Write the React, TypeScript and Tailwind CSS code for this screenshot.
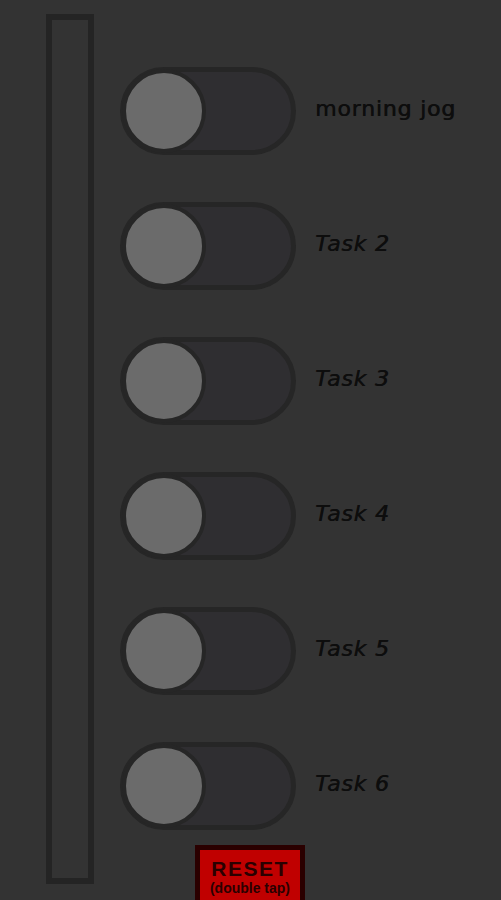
const tasks = [
  { label: 'morning jog', italic: false },
  { label: 'Task 2', italic: true },
  { label: 'Task 3', italic: true },
  { label: 'Task 4', italic: true },
  { label: 'Task 5', italic: true },
  { label: 'Task 6', italic: true },
];

function Toggle() {
  return (
    <div className="relative h-[88px] w-[176px] shrink-0 rounded-full border-[5px] border-[#262626] bg-[#2f2e31]">
      <div className="absolute left-[-3px] top-[-3px] h-[84px] w-[84px] rounded-full border-4 border-[#262626] bg-[#6b6b6b]" />
    </div>
  );
}

export default function App() {
  return (
    <div
      className="h-[900px] w-full overflow-hidden bg-[#333333]"
      style={{ fontFamily: '"DejaVu Sans", Verdana, sans-serif' }}
    >
      <div className="flex">
        <div className="ml-[46px] mt-[14px] h-[870px] w-[48px] shrink-0 border-[6px] border-[#242424] bg-[#333333]" />

        <div className="ml-[26px] mt-[67px] flex flex-col">
          <div className="flex flex-col gap-[47px]">
            {tasks.map((t) => (
              <div key={t.label} className="flex items-center gap-[19px]">
                <Toggle />
                <span
                  className={`-mt-[6px] text-[22px] font-normal tracking-[0.8px] text-[#0d0d0d] [text-shadow:0.6px_0_0_#0d0d0d] ${t.italic ? 'italic' : ''}`}
                >
                  {t.label}
                </span>
              </div>
            ))}
          </div>

          <button className="ml-[75px] mt-[15px] flex h-[62px] w-[110px] flex-col items-center border-[5px] border-[#2a0000] bg-[#c00000] pt-[8px] leading-none text-[#2a0000]">
            <span className="text-[21px] font-bold tracking-[1.5px]" style={{ fontFamily: '"Liberation Sans", Arial, sans-serif' }}>
              RESET
            </span>
            <span className="mt-[2px] text-[14px] font-bold" style={{ fontFamily: '"Liberation Sans", Arial, sans-serif' }}>
              (double tap)
            </span>
          </button>
        </div>
      </div>
    </div>
  );
}
